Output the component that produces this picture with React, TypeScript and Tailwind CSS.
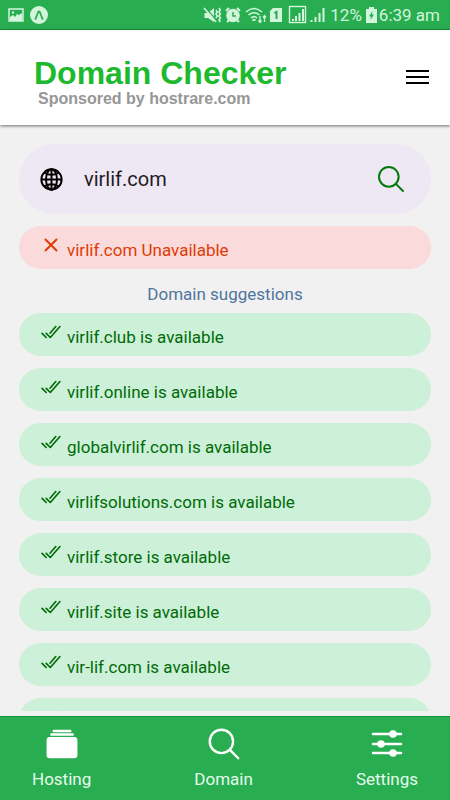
import { useState } from "react";
import {
  IoAlbums,
  IoCheckmarkDoneOutline,
  IoGlobeOutline,
  IoSearchOutline,
} from "react-icons/io5";

const suggestions = [
  "virlif.club",
  "virlif.online",
  "globalvirlif.com",
  "virlifsolutions.com",
  "virlif.store",
  "virlif.site",
  "vir-lif.com",
  "virlif.net",
];

function StatusBar() {
  return (
    <div className="flex h-[30px] shrink-0 items-center justify-between border-b border-[#159337] bg-[#28ae50] pr-2.5 pl-2 text-[#d2f5dc]">
      <div className="flex items-center gap-1.5">
        <svg width="16" height="14" viewBox="0 0 16 14" fill="none" stroke="currentColor" strokeWidth="1.5">
          <rect x="1" y="1" width="14" height="12" />
          <circle cx="5" cy="4.5" r="1.2" fill="currentColor" stroke="none" />
          <path d="M2 9l3-2 2 2 2-3 2 1 3-2v8H2z" fill="currentColor" stroke="none" />
        </svg>
        <svg width="18" height="18" viewBox="0 0 18 18">
          <circle cx="9" cy="9" r="9" fill="currentColor" />
          <path d="M5.5 13L8 6.5Q9 4.5 10 6.5L12.5 13" fill="none" stroke="#28ae50" strokeWidth="1.8" strokeLinecap="round" />
        </svg>
      </div>
      <div className="flex items-center">
        <svg width="127" height="20" viewBox="0 0 127 20" fill="none" stroke="currentColor">
          <g>
            <path d="M1.500 8h3.500l6-5v14l-6-4H1.500z" fill="currentColor" stroke="none" />
            <path d="M2 2l11 13" stroke="#28ae50" strokeWidth="1.300" />
            <path d="M1 3l12 14" strokeWidth="1.600" />
            <path d="M13 5l1.300 2-1.300 2 1.300 2-1.300 2M16 3l1.300 2-1.300 2 1.300 2-1.300 2 1.300 2-1.300 2 1.300 2" strokeWidth="1.600" />
          </g>
          <g>
            <circle cx="30" cy="10.500" r="6.800" fill="currentColor" stroke="none" />
            <path d="M23 6l3-3M37 6l-3-3M26 15l-2 2M34 15l2 2" strokeWidth="2" />
            <path d="M30 7v4h3" stroke="#28ae50" strokeWidth="1.500" />
          </g>
          <g strokeWidth="1.600">
            <path d="M43 7q8-7 16 0M45.500 10q5.500-4.500 11 0M48 13q3-2.500 6 0" />
            <path d="M49.500 15h3" strokeWidth="2" />
            <path d="M57 11v6M55.500 15.500l1.500 2 1.500-2M61.500 17v-6M60 12.500l1.500-2 1.500 2" strokeWidth="1.300" />
          </g>
          <path d="M70 3h9v14H67V6z" fill="currentColor" stroke="none" />
          <path d="M71.500 8l2-1v7" stroke="#28ae50" strokeWidth="2" />
          <g>
            <rect x="86.500" y="1.500" width="16" height="16" strokeWidth="1.400" />
            <path d="M90 16v-2M93 16v-5M96.500 16V8M100 16V4" strokeWidth="2" />
          </g>
          <path d="M108.500 17v-2M112.500 17v-5M116.500 17V8M120.500 17V3" strokeWidth="2" />
        </svg>
        <span className="text-[17px] leading-5">12%</span>
        <svg className="mr-0.5 ml-1" width="11" height="16" viewBox="0 0 11 16">
          <path d="M3 0h5v2h3v14H0V2h3z" fill="currentColor" />
          <path d="M6.500 4L3 9.500h2L4.500 13 8 7.500H6z" fill="#28ae50" />
        </svg>
        <time className="text-[17px] leading-5">6:39 am</time>
      </div>
    </div>
  );
}

function Header() {
  return (
    <header className="z-10 flex h-[95px] shrink-0 items-center justify-between bg-white pr-5 pl-[34px] shadow-[0_1px_3px_rgba(0,0,0,0.55)]">
      <div className="pt-1.5 font-['Liberation_Sans',Arial,sans-serif] font-bold">
        <h1 className="text-[32px] leading-9 text-[#1db92f]">Domain Checker</h1>
        <p className="pl-1 text-base leading-4 text-[#969696]">Sponsored by hostrare.com</p>
      </div>
      <button type="button" aria-label="Menu" className="text-black">
        <svg width="24" height="17" viewBox="0 0 24 17" stroke="currentColor" strokeWidth="2">
          <path d="M0 2h23M0 8h23M0 14h23" />
        </svg>
      </button>
    </header>
  );
}

function SearchBox() {
  const [query, setQuery] = useState("virlif.com");
  return (
    <form
      role="search"
      onSubmit={(event) => event.preventDefault()}
      className="flex h-[70px] items-center rounded-full bg-[#eee8f4] pr-6 pl-5 text-black"
    >
      <IoGlobeOutline
        size={25}
        aria-hidden="true"
        className="shrink-0 [&_path]:[stroke-width:40px]"
      />
      <input
        type="text"
        aria-label="Domain name"
        value={query}
        onChange={(event) => setQuery(event.target.value)}
        className="ml-5 min-w-0 flex-1 bg-transparent text-xl text-[#1f1b24] outline-none"
      />
      <button type="submit" aria-label="Search" className="text-[#007a08]">
        <IoSearchOutline size={32} />
      </button>
    </form>
  );
}

function CloseIcon() {
  return (
    <svg width="22" height="22" viewBox="0 0 22 22" fill="none" stroke="currentColor" strokeWidth="2" strokeLinecap="round" aria-hidden="true" className="mt-2">
      <path d="M5.500 5.500l11 11M16.500 5.500l-11 11" />
    </svg>
  );
}

function SuggestionRow({ domain }: { domain: string }) {
  return (
    <li className="flex h-[43px] shrink-0 items-start rounded-full bg-[#cdf0d9] pl-[21px] text-[17px] leading-6 text-[#006b06]">
      <IoCheckmarkDoneOutline
        size={22}
        aria-hidden="true"
        className="mt-2 [&_path]:[stroke-width:38px]"
      />
      <span className="mt-3 ml-[5px]">{domain} is available</span>
    </li>
  );
}

function OptionsIcon() {
  return (
    <svg width="34" height="34" viewBox="0 0 34 34" fill="currentColor" stroke="currentColor" strokeWidth="2.500" strokeLinecap="round">
      <path d="M3 7h28M3 17h28M3 26h28" />
      <circle cx="23" cy="7" r="2.500" />
      <circle cx="11" cy="17" r="2.500" />
      <circle cx="23" cy="26" r="2.500" />
    </svg>
  );
}

function BottomNav() {
  const item = "flex flex-col items-center gap-1 text-[17px] leading-6";
  return (
    <nav className="flex h-[84px] shrink-0 items-start justify-between border-t border-[#159337] bg-[#28ae50] px-8 pt-2 text-[#e6fbed]">
      <button type="button" className={item}>
        <IoAlbums size={38} className="text-white" />
        Hosting
      </button>
      <button type="button" className={item}>
        <IoSearchOutline size={38} className="text-white" />
        Domain
      </button>
      <button type="button" className={item}>
        <span className="flex h-[38px] items-center text-white">
          <OptionsIcon />
        </span>
        Settings
      </button>
    </nav>
  );
}

export default function App() {
  return (
    <div className="flex h-screen flex-col overflow-hidden bg-[#f1f1f1] font-[Roboto,sans-serif]">
      <StatusBar />
      <Header />
      <main className="mb-[5px] min-h-0 flex-1 overflow-hidden px-[19px] pt-[19px]">
        <SearchBox />
        <div className="mt-3 flex h-[43px] items-start rounded-full bg-[#fadadb] pl-[21px] text-[17px] leading-6 text-[#dd3c05]">
          <CloseIcon />
          <span className="mt-3 ml-[5px]">virlif.com Unavailable</span>
        </div>
        <h2 className="mt-[13px] text-center text-[17px] leading-6 text-[#50759d]">Domain suggestions</h2>
        <ul className="mt-[7px] flex flex-col gap-3">
          {suggestions.map((domain) => (
            <SuggestionRow key={domain} domain={domain} />
          ))}
        </ul>
      </main>
      <BottomNav />
    </div>
  );
}
